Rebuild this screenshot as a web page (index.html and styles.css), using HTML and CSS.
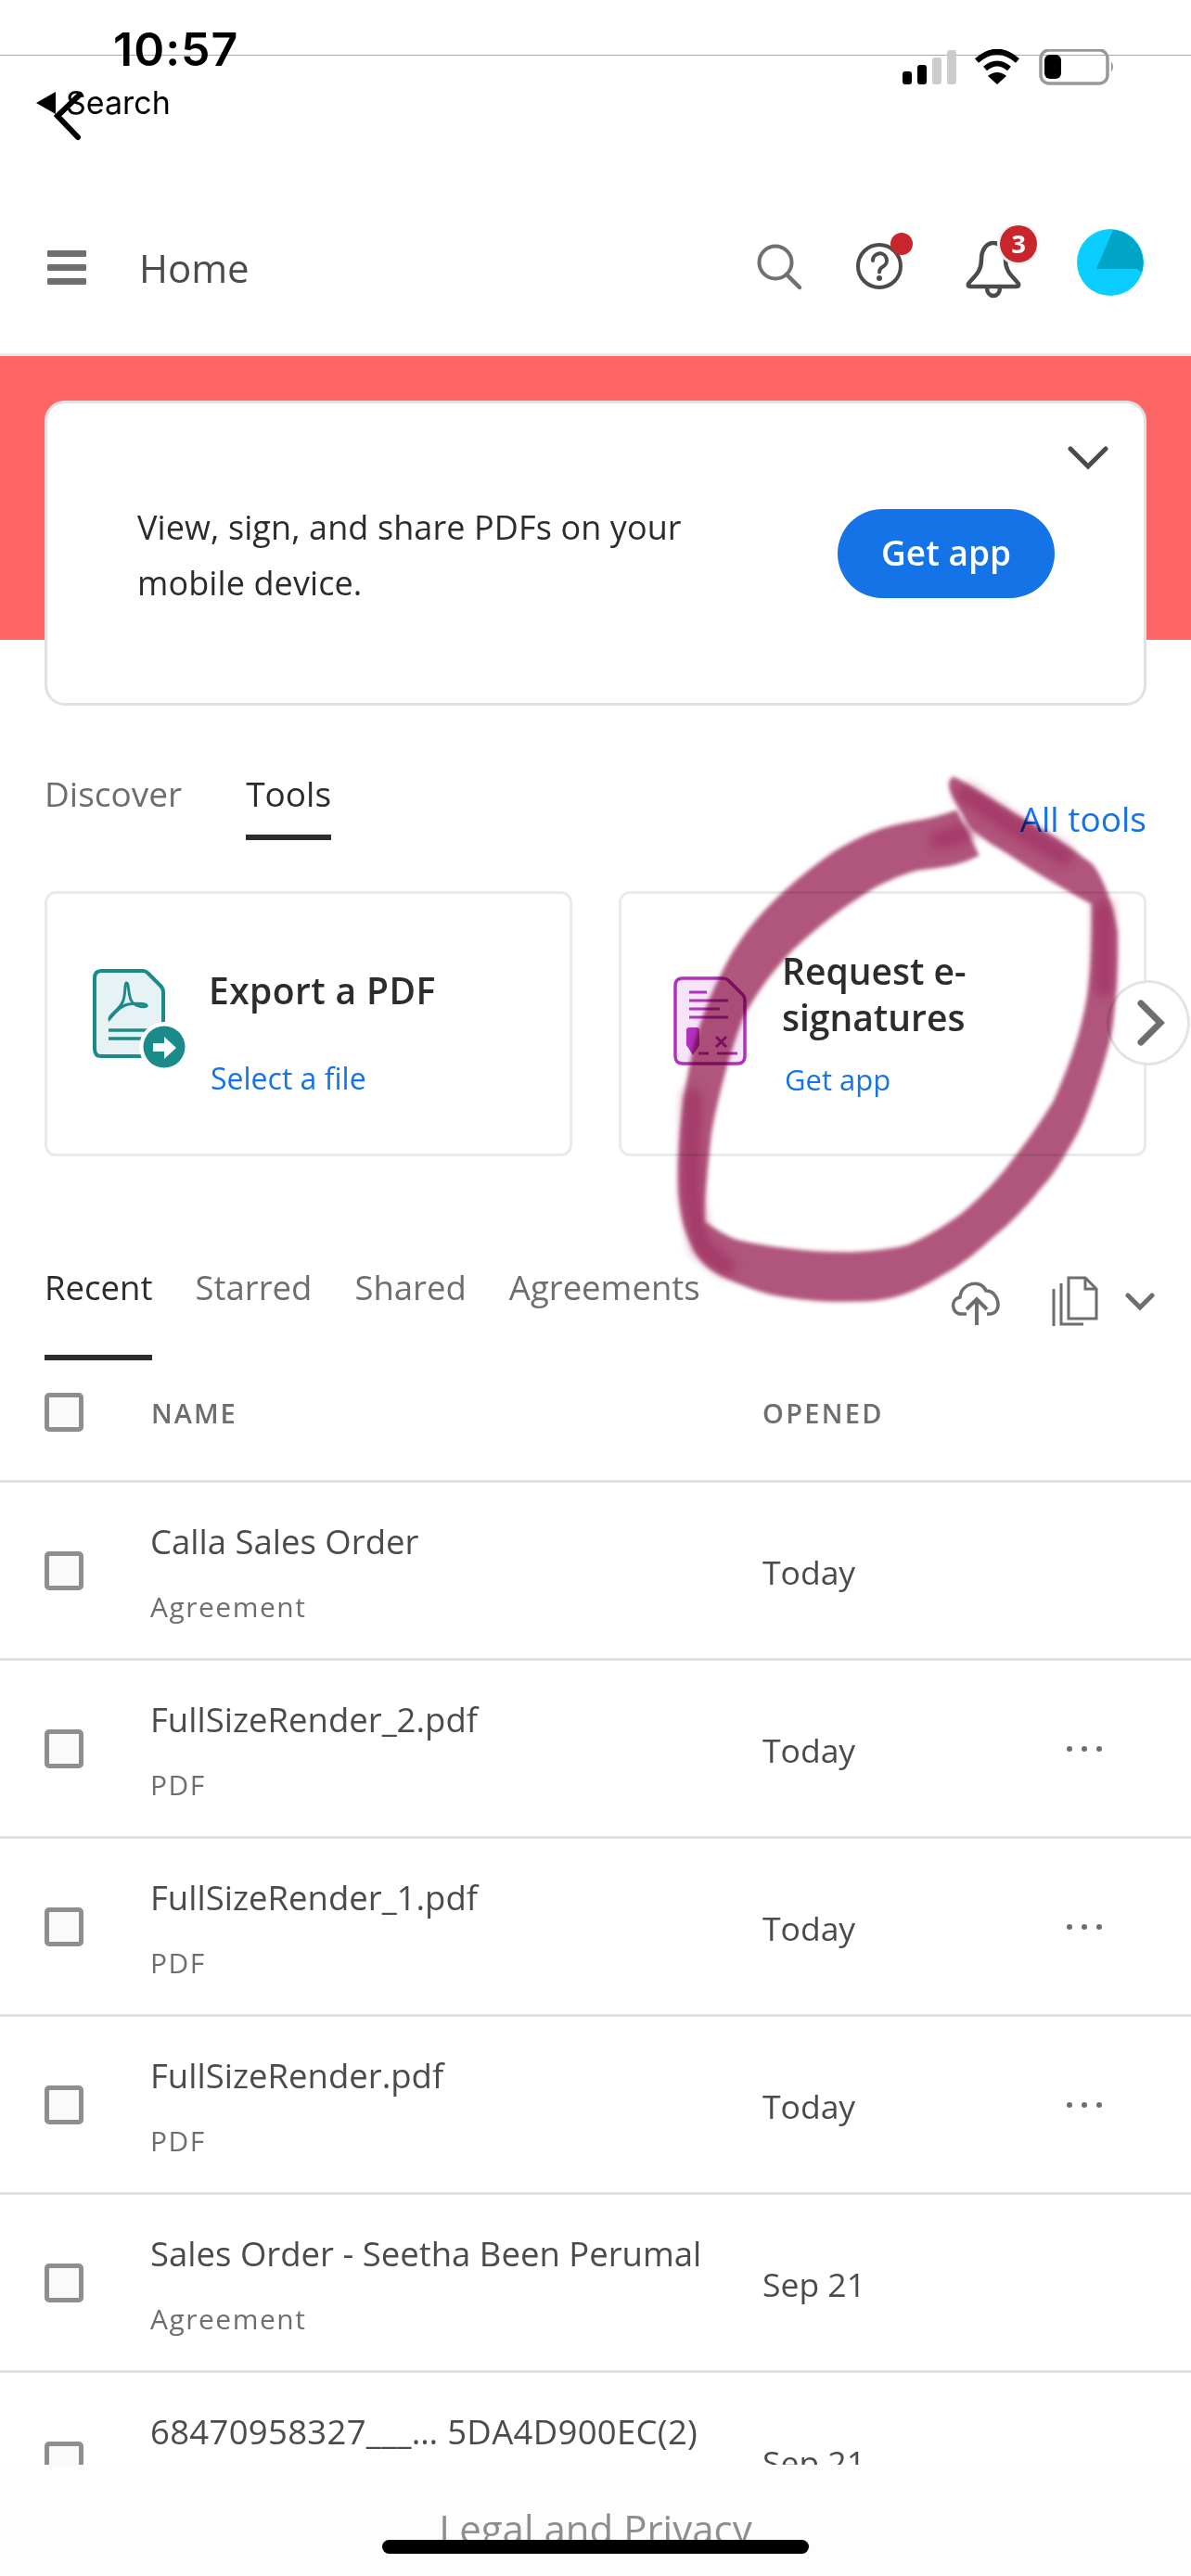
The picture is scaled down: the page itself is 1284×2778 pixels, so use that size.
FILE: index.html
```html
<!DOCTYPE html>
<html lang="en">
<head>
<meta charset="utf-8">
<title>Home</title>
<link rel="stylesheet" href="styles.css">
</head>
<body>
<div class="page">
  <header class="top">
    <div class="status">
      <span class="time">10:57</span>
      <svg class="status-icons" width="234" height="40" viewBox="970 53 234 40">
        <rect x="973" y="77" width="10" height="14" rx="3" fill="#000"/>
        <rect x="989" y="70" width="10" height="21" rx="3" fill="#000"/>
        <rect x="1005" y="62" width="10" height="29" rx="3" fill="#ccc"/>
        <rect x="1021" y="54" width="10" height="37" rx="3" fill="#ccc"/>
        <path d="M1053 65.500Q1075 46 1097 65.500M1062 74Q1075 63 1088 74" fill="none" stroke="#000" stroke-width="6"/>
        <path d="M1065 82Q1075 74 1085 82L1075 91Z" fill="#000"/>
        <rect x="1122" y="54" width="72" height="36" rx="9" fill="none" stroke="#999" stroke-width="3.500"/>
        <rect x="1126" y="59" width="18" height="26" rx="6" fill="#000"/>
        <path d="M1198 66Q1202 72 1198 78Z" fill="#999"/>
      </svg>
    </div>
    <div class="back">
      <span class="back-arrow"></span>
      <span class="back-label">Search</span>
      <svg class="back-chevron" width="34" height="56" viewBox="0 0 34 56"><path d="M28 3L4 26L26 49" fill="none" stroke="#000" stroke-width="6" stroke-linecap="round"/></svg>
    </div>
    <div class="appbar">
      <div class="burger"><i></i><i></i><i></i></div>
      <span class="app-title">Home</span>
      <div class="app-icons">
        <svg class="ic-search" width="56" height="56" viewBox="0 0 56 56"><circle cx="22" cy="22" r="17.500" fill="none" stroke="#707070" stroke-width="4"/><path d="M34 35L48 49" stroke="#707070" stroke-width="4.500" stroke-linecap="round"/></svg>
        <svg class="ic-help" width="76" height="76" viewBox="0 0 76 76"><circle cx="30" cy="34" r="23" fill="none" stroke="#4b4b4b" stroke-width="4"/><path d="M23 28a7.500 7.500 0 1 1 11 6.500q-4 2-4 6" fill="none" stroke="#4b4b4b" stroke-width="4" stroke-linecap="round"/><circle cx="30" cy="47" r="3" fill="#4b4b4b"/><circle cx="54" cy="10" r="12" fill="#c9252d"/></svg>
        <svg class="ic-bell" width="96" height="86" viewBox="0 0 96 86"><path d="M24 31c0-24 26-24 26 0c0 14 8 18 14 26c1 2 0 3-2 3H12c-2 0-3-1-2-3c6-8 14-12 14-26Z" fill="none" stroke="#4b4b4b" stroke-width="4.500"/><path d="M30 61c0 12 14 12 14 0" fill="none" stroke="#4b4b4b" stroke-width="4.500"/><circle cx="64" cy="14" r="23" fill="#f5f5f5"/><circle cx="64" cy="14" r="20" fill="#c9252d"/></svg>
        <span class="bell-count">3</span>
        <svg class="avatar" width="72" height="72" viewBox="0 0 72 72"><circle cx="36" cy="36" r="36" fill="#09ceff"/><path d="M39 1A36 36 0 0 1 70 47L65 43H21Z" fill="#00a4c6"/></svg>
      </div>
    </div>
  </header>

  <section class="hero">
    <div class="promo">
      <p class="promo-text">View, sign, and share PDFs on your mobile device.</p>
      <span class="promo-btn">Get app</span>
      <svg class="promo-chevron" width="44" height="26" viewBox="0 0 44 26"><path d="M3 3L22 22L41 3" fill="none" stroke="#4b4b4b" stroke-width="5" stroke-linecap="round"/></svg>
    </div>
  </section>

  <section class="tools">
    <div class="tools-head">
      <span class="tab">Discover</span>
      <span class="tab tab-on">Tools</span>
      <span class="all-tools">All tools</span>
    </div>
    <div class="cards">
      <article class="card card-export">
        <svg class="card-icon" width="126" height="120" viewBox="0 0 126 120">
          <path d="M9 2H54Q57 2 59 4L73 18Q76 21 76 25V86Q76 94 68 94H9Q2 94 2 86V10Q2 2 9 2Z" fill="#e6f2f3" stroke="#1a8a8b" stroke-width="4"/>
          <path d="M18 54C17 50 27 46 32 36C36 28 34 16 36 15C39 14 38 26 41 33C44 40 54 42 58 40C60 38 50 36 38 38C28 40 20 52 18 54Z" fill="none" stroke="#1a8a8b" stroke-width="3"/>
          <path d="M17 66H60M17 75H60" stroke="#1a8a8b" stroke-width="3.500"/>
          <circle cx="77" cy="84" r="27" fill="#fff"/>
          <circle cx="77" cy="84" r="22.500" fill="#1a8a8b"/>
          <path d="M65 80H77V73L90 85L77 97V89H65Z" fill="#fff"/>
        </svg>
        <div class="card-body">
          <h2 class="card-title">Export a PDF</h2>
          <span class="card-link">Select a file</span>
        </div>
      </article>
      <article class="card card-sign">
        <svg class="card-icon" width="116" height="100" viewBox="0 0 116 100">
          <path d="M9 2H52Q56 2 58 4L74 20Q76 22 76 26V86Q76 94 68 94H9Q1 94 1 86V10Q1 2 9 2Z" fill="#f6e5f8" stroke="#b130bd" stroke-width="3.500"/>
          <path d="M16 17H35M16 26H58M16 35H49M16 44H58M26 83H37M46 83H68M45 65L56 76M56 65L45 76" stroke="#b130bd" stroke-width="3"/>
          <path d="M13 58Q13 55 16 55H24Q27 55 27 58V74L20 85L13 74Z" fill="#b130bd"/>
        </svg>
        <div class="card-body">
          <h2 class="card-title">Request e-signatures</h2>
          <span class="card-link">Get app</span>
        </div>
      </article>
      <span class="next">
        <svg width="30" height="50" viewBox="0 0 30 50"><path d="M4 4L25 25L4 46" fill="none" stroke="#6e6e6e" stroke-width="7" stroke-linecap="round"/></svg>
      </span>
    </div>
  </section>

  <section class="files">
    <div class="file-tabs">
      <span class="ftab ftab-on">Recent</span>
      <span class="ftab">Starred</span>
      <span class="ftab">Shared</span>
      <span class="ftab">Agreements</span>
      <div class="file-actions">
        <svg class="act-upload" width="58" height="58" viewBox="0 0 58 58"><path d="M18 42H12C2 42 0 26 11 24C12 8 34 4 39 17C52 16 58 40 44 42H40" fill="none" stroke="#6e6e6e" stroke-width="3.500"/><path d="M29 54V28M18 37L29 26L40 37" fill="none" stroke="#6e6e6e" stroke-width="4"/></svg>
        <svg class="act-copy" width="54" height="56" viewBox="0 0 54 56"><path d="M20 2H38L50 14V46H20Z" fill="#fff" stroke="#6e6e6e" stroke-width="3"/><path d="M38 2V14H50" fill="none" stroke="#6e6e6e" stroke-width="3"/><path d="M12 8V52H36M4 14V54" fill="none" stroke="#6e6e6e" stroke-width="3"/></svg>
        <svg class="act-more" width="32" height="20" viewBox="0 0 32 20"><path d="M3 3L16 16L29 3" fill="none" stroke="#6e6e6e" stroke-width="5" stroke-linecap="round"/></svg>
      </div>
    </div>
    <div class="list">
      <div class="list-head">
        <span class="check"></span>
        <span class="col-name">NAME</span>
        <span class="col-date">OPENED</span>
      </div>
      <div class="row">
        <span class="check"></span>
        <div class="cell-name"><div class="file-name">Calla Sales Order</div><div class="file-kind">Agreement</div></div>
        <span class="cell-date">Today</span>
      </div>
      <div class="row">
        <span class="check"></span>
        <div class="cell-name"><div class="file-name">FullSizeRender_2.pdf</div><div class="file-kind">PDF</div></div>
        <span class="cell-date">Today</span>
        <span class="dots"><i></i><i></i><i></i></span>
      </div>
      <div class="row">
        <span class="check"></span>
        <div class="cell-name"><div class="file-name">FullSizeRender_1.pdf</div><div class="file-kind">PDF</div></div>
        <span class="cell-date">Today</span>
        <span class="dots"><i></i><i></i><i></i></span>
      </div>
      <div class="row">
        <span class="check"></span>
        <div class="cell-name"><div class="file-name">FullSizeRender.pdf</div><div class="file-kind">PDF</div></div>
        <span class="cell-date">Today</span>
        <span class="dots"><i></i><i></i><i></i></span>
      </div>
      <div class="row">
        <span class="check"></span>
        <div class="cell-name"><div class="file-name">Sales Order - Seetha Been Perumal</div><div class="file-kind">Agreement</div></div>
        <span class="cell-date">Sep 21</span>
      </div>
      <div class="row">
        <span class="check"></span>
        <div class="cell-name"><div class="file-name file-name-long">68470958327___… 5DA4D900EC(2)</div><div class="file-kind">PDF</div></div>
        <span class="cell-date">Sep 21</span>
      </div>
    </div>
  </section>

  <footer class="foot">
    <div class="legal">Legal and Privacy</div>
    <div class="home-bar"></div>
  </footer>

  <svg class="ink" width="584" height="600" viewBox="0 0 1568 1568" preserveAspectRatio="none">
    <defs><filter id="soft" x="-5%" y="-5%" width="110%" height="110%"><feGaussianBlur stdDeviation="5"/></filter><filter id="softer" x="-10%" y="-10%" width="120%" height="120%"><feGaussianBlur stdDeviation="14"/></filter></defs>
    <path filter="url(#soft)" fill="#b0557b" d="M880 45C930 70 1000 115 1060 150C1120 185 1180 215 1280 290C1315 325 1345 420 1355 480C1358 560 1352 680 1340 760C1330 820 1270 1000 1240 1050C1200 1120 1170 1170 1130 1210C1090 1260 1040 1310 1000 1340C950 1385 900 1425 850 1450C800 1480 760 1500 720 1510C680 1522 640 1525 600 1525C550 1527 500 1525 450 1520C400 1515 350 1508 300 1490C255 1475 205 1455 170 1430C140 1405 125 1375 110 1340C95 1305 90 1270 85 1230C82 1190 82 1140 85 1100C88 1050 92 1000 100 950C108 900 118 850 130 800C142 755 158 710 175 670C190 635 210 595 230 560C250 525 275 490 300 460C330 425 365 390 400 360C440 325 485 290 530 260C580 230 630 205 680 190C720 178 760 172 800 165C830 160 860 150 890 140L955 268C930 280 905 290 880 295C845 303 815 305 780 310C735 320 695 338 650 360C610 385 570 410 530 440C490 470 455 500 420 530C390 560 365 590 340 620C315 655 290 690 270 730C250 780 235 830 220 880C205 935 190 995 180 1050C170 1140 160 1220 160 1300C190 1320 220 1338 250 1350C300 1362 350 1370 400 1375C465 1383 535 1387 600 1385C650 1382 700 1378 750 1365C800 1345 850 1315 900 1280C950 1240 1000 1190 1040 1140C1085 1085 1130 1025 1170 960C1195 905 1220 845 1240 780C1258 720 1270 660 1275 600C1280 530 1282 470 1280 405C1245 388 1215 370 1180 350C1135 325 1085 295 1040 265C1005 245 970 225 940 200C925 185 912 168 905 150C890 125 875 100 870 85C865 70 865 55 880 45Z"/>
    <path filter="url(#softer)" fill="none" stroke="#a0305f" stroke-width="52" stroke-opacity=".7" stroke-linecap="round" d="M915 95L1060 190L1200 270M1315 420L1315 640M125 950L122 1230L150 1370L220 1425M840 225L915 205"/>
  </svg>
</div>
</body>
</html>
```

FILE: styles.css
```css
* { box-sizing: border-box; }
html, body { margin: 0; padding: 0; background: #fff; }
body { width: 1284px; height: 2778px; overflow: hidden; font-family: "Open Sans", "Noto Sans", sans-serif; color: #2c2c2c; }
.page { position: relative; width: 1284px; height: 2778px; overflow: hidden; }

/* top chrome */
.top { height: 384px; border-bottom: 3px solid #e8e8e8; background: #fff; }
.status { position: relative; height: 93px; display: flex; justify-content: space-between; padding: 0 80px 0 122px; }
.status::before { content: ""; position: absolute; left: 0; right: 0; top: 59px; height: 1px; background: #aaa; }
.time { position: relative; font-family: Inter, sans-serif; font-weight: 600; font-size: 50px; line-height: 56px; padding-top: 25px; height: 81px; letter-spacing: 1px; color: #000; }
.status-icons { position: relative; margin-top: 53px; }
.back { position: relative; height: 67px; display: flex; align-items: center; padding-left: 39px; }
.back-arrow { width: 0; height: 0; border-style: solid; border-width: 12px 21px 12px 0; border-color: transparent #000 transparent transparent; margin-top: -31px; }
.back-label { font-family: Inter, sans-serif; font-size: 34px; line-height: 40px; color: #000; margin-left: 11px; margin-top: -31px; }
.back-chevron { position: absolute; left: 58px; top: 6px; }

.appbar { display: flex; align-items: center; height: 121px; margin-top: 68px; padding-left: 51px; }
.burger { display: flex; flex-direction: column; gap: 8px; width: 42px; }
.burger i { display: block; height: 7px; border-radius: 1px; background: #6e6e6e; }
.app-title { margin-left: 57px; font-size: 42px; line-height: 56px; color: #4b4b4b; }
.app-icons { position: relative; margin-left: auto; display: flex; align-items: flex-start; height: 121px; padding-right: 51px; }
.app-icons svg { flex: none; overflow: visible; }
.ic-search { margin-top: 33px; }
.ic-help { margin: 25px 0 0 48px; }
.ic-bell { margin: 21px 0 0 40px; }
.bell-count { position: absolute; right: 178px; top: 17px; color: #fff; font-weight: 700; font-size: 27px; line-height: 36px; }
.avatar { margin: 19px 0 0 31px; }

/* hero */
.hero { height: 306px; padding: 48px 48px 0; background: #ff6666; }
.promo { position: relative; height: 329px; display: flex; align-items: flex-start; background: #fff; border: 3px solid #e1e1e1; border-radius: 22px; padding: 104px 0 0 97px; }
.promo-text { margin: 0; width: 640px; font-size: 36px; letter-spacing: .1px; line-height: 60px; color: #2c2c2c; }
.promo-btn { position: absolute; left: 852px; top: 114px; width: 234px; height: 96px; border-radius: 48px; background: #1473e6; color: #fff; font-size: 37px; font-weight: 600; line-height: 94px; text-align: center; }
.promo-chevron { position: absolute; left: 1100px; top: 46px; }

/* tools */
.tools { padding: 140px 48px 0; }
.tools-head { display: flex; align-items: flex-start; height: 76px; }
.tab { height: 76px; line-height: 52px; font-size: 37px; color: #6e6e6e; margin-right: 69px; padding-bottom: 18px; }
.tab-on { color: #2c2c2c; border-bottom: 6px solid #2c2c2c; }
.all-tools { margin-left: auto; align-self: flex-end; margin-bottom: -2px; font-size: 37px; line-height: 50px; color: #1473e6; }
.cards { position: relative; display: grid; grid-template-columns: 569px 569px; column-gap: 50px; margin-top: 55px; }
.card { display: flex; align-items: flex-start; height: 286px; background: #fff; border: 3px solid #eaeaea; border-radius: 12px; }
.card-export { padding: 79px 0 0 49px; }
.card-sign { padding: 58px 0 0 57px; }
.card-icon { flex: none; overflow: visible; }
.card-export .card-icon { margin-top: 2px; }
.card-sign .card-icon { margin-top: 31px; }
.card-body { display: flex; flex-direction: column; align-items: flex-start; }
.card-title { margin: 0; width: 300px; font-size: 39px; line-height: 50px; font-weight: 600; color: #2c2c2c; }
.card-export .card-title { letter-spacing: .4px; margin-left: -1px; }
.card-link { font-size: 32px; line-height: 44px; color: #1473e6; }
.card-export .card-link { margin: 48px 0 0 1px; }
.card-sign .card-link { margin: 20px 0 0 3px; font-size: 31px; }
.next { position: absolute; left: 1145px; top: 96px; width: 90px; height: 92px; display: flex; align-items: center; justify-content: center; background: #fff; border: 3px solid #e4e4e4; border-radius: 50%; padding-left: 6px; }

/* files */
.files { margin-top: 116px; }
.file-tabs { display: flex; align-items: flex-start; height: 104px; padding: 0 39px 0 48px; }
.ftab { height: 104px; font-size: 36.500px; line-height: 50px; color: #6e6e6e; margin-right: 46px; padding-bottom: 48px; }
.ftab-on { color: #2c2c2c; border-bottom: 6px solid #2c2c2c; }
.file-actions { display: flex; align-items: center; margin: 12px 0 0 auto; }
.act-copy { margin-left: 50px; }
.act-more { margin-left: 27px; }
.list { height: 1191px; overflow: hidden; }
.list-head { display: flex; align-items: center; height: 132px; padding: 0 0 18px 48px; border-bottom: 3px solid #e1e1e1; }
.check { flex: none; width: 42px; height: 42px; border: 5px solid #8e8e8e; border-radius: 5px; background: #fafafa; }
.col-name { width: 659px; margin: 2px 0 0 73px; font-size: 29px; font-weight: 600; letter-spacing: 2px; color: #6e6e6e; }
.col-date { margin-top: 2px; font-size: 29px; font-weight: 600; letter-spacing: 2.300px; color: #6e6e6e; }
.row { display: flex; align-items: center; height: 192px; padding-left: 48px; border-bottom: 3px solid #e1e1e1; }
.cell-name { width: 659px; margin-left: 73px; align-self: flex-start; padding-top: 38px; }
.file-name { margin-left: -1px; font-size: 36.500px; line-height: 50px; color: #4b4b4b; white-space: nowrap; }
.file-name-long { letter-spacing: .3px; }
.file-kind { margin: 26px 0 0 -1px; font-size: 30px; line-height: 40px; letter-spacing: 1.500px; color: #6e6e6e; }
.cell-date { width: 328px; margin-top: 3px; font-size: 35.500px; line-height: 50px; color: #4b4b4b; }
.dots { display: flex; gap: 10px; }
.dots i { display: block; width: 6px; height: 6px; border-radius: 50%; background: #6e6e6e; }

/* footer */
.foot { height: 120px; padding-top: 46px; background: #fdfdfd; }
.legal { height: 35px; overflow: hidden; text-align: center; font-size: 42px; line-height: 46px; color: #8e8e8e; }
.home-bar { width: 460px; height: 15px; margin: 0 auto; border-radius: 8px; background: #000; }

/* hand-drawn marker annotation */
.ink { position: absolute; left: 700px; top: 820px; mix-blend-mode: multiply; overflow: visible; }
```
